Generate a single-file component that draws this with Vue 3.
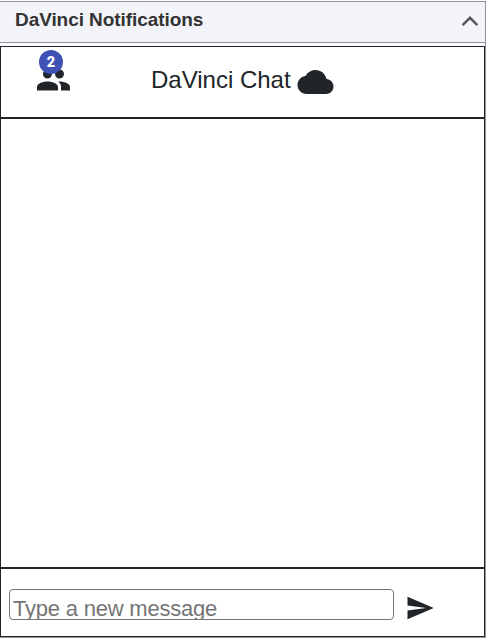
<script setup>
import { ref } from 'vue'

const title = ref('DaVinci Notifications')
const participants = ref(2)
const message = ref('')
</script>

<template>
  <div class="panel">
    <header class="panel-header">
      <span class="panel-title">{{ title }}</span>
      <svg class="chevron" viewBox="0 0 18 12" aria-hidden="true">
        <path d="M1.6 10.2 L9 2.8 L16.4 10.2" />
      </svg>
    </header>
    <section class="chat">
      <div class="chat-header">
        <div class="people">
          <svg class="icon" viewBox="-0.33 0 24 24" aria-hidden="true">
            <path d="M16 11c1.66 0 2.99-1.34 2.99-3S17.66 5 16 5c-1.66 0-3 1.34-3 3s1.34 3 3 3zm-8 0c1.66 0 2.99-1.34 2.99-3S9.66 5 8 5C6.34 5 5 6.34 5 8s1.34 3 3 3zm0 2c-2.33 0-7 1.17-7 3.5V19h14v-2.5c0-2.33-4.67-3.5-7-3.5zm8 0c-.29 0-.62.02-.97.05 1.16.84 1.97 1.97 1.97 3.45V19h6v-2.5c0-2.33-4.67-3.5-7-3.5z" />
          </svg>
          <span class="badge">{{ participants }}</span>
        </div>
        <div class="chat-title">
          <span>DaVinci Chat</span>
          <svg class="icon cloud" viewBox="0.33 0 24 24" aria-hidden="true">
            <path d="M19.35 10.04C18.67 6.59 15.64 4 12 4 9.11 4 6.6 5.64 5.35 8.04 2.34 8.36 0 10.91 0 14c0 3.31 2.69 6 6 6h13c2.76 0 5-2.24 5-5 0-2.64-2.05-4.78-4.65-4.96z" />
          </svg>
        </div>
      </div>
      <div class="messages"></div>
      <div class="composer">
        <input v-model="message" class="message-input" type="text" placeholder="Type a new message" />
        <svg class="send" viewBox="0 0 24 24" aria-hidden="true">
          <path d="M2.01 21L23 12 2.01 3 2 10l15 2-15 2z" />
        </svg>
      </div>
    </section>
  </div>
</template>

<style>
body {
  background: #fff;
  overflow: hidden;
}
</style>

<style scoped>
.panel {
  box-sizing: border-box;
  width: 486px;
  height: 637px;
  margin-top: 1px;
  border: 1px solid #939399;
  border-left: 0;
  display: flex;
  flex-direction: column;
  font-family: "Liberation Sans", Arial, sans-serif;
  color: #212529;
}
.panel-header {
  box-sizing: border-box;
  flex: none;
  height: 41px;
  margin-bottom: 3px;
  padding: 0 6px 4px 15px;
  display: flex;
  align-items: center;
  justify-content: space-between;
  background: #f3f4fa;
  border-bottom: 1px solid #939399;
}
.panel-title {
  font-size: 19px;
  line-height: 24px;
  font-weight: 700;
  letter-spacing: -0.07px;
  color: #333;
  white-space: nowrap;
}
.chevron {
  width: 18px;
  height: 12px;
  margin-top: 2px;
}
.chevron path {
  fill: none;
  stroke: #56565b;
  stroke-width: 2.4;
}
.chat {
  box-sizing: border-box;
  flex: 1;
  border: 1px solid #212529;
  display: flex;
  flex-direction: column;
}
.chat-header {
  flex: none;
  height: 70px;
  display: flex;
  align-items: flex-start;
  border-bottom: 2px solid #212529;
}
.icon {
  display: block;
  width: 36px;
  height: 36px;
  overflow: visible;
  fill: #212529;
}
.people {
  position: relative;
  margin: 14.5px 0 0 34px;
}
.badge {
  position: absolute;
  left: 4px;
  top: -11.5px;
  width: 24px;
  height: 24px;
  border-radius: 50%;
  background: #3f51b5;
  color: #fff;
  font: 900 14.5px/25px Roboto, "Liberation Sans", sans-serif;
  text-align: center;
}
.chat-title {
  display: flex;
  margin: 17px 0 0 80px;
  font-size: 24px;
  line-height: 32px;
  white-space: nowrap;
}
.cloud {
  margin-left: 7px;
}
.messages {
  flex: 1;
}
.composer {
  box-sizing: border-box;
  flex: none;
  height: 69px;
  padding: 20px 0 0 8px;
  display: flex;
  align-items: flex-start;
  border-top: 2px solid #212529;
}
.message-input {
  box-sizing: border-box;
  width: 385px;
  height: 31px;
  padding: 8px 3px 0;
  border: 1px solid #767676;
  border-radius: 4px;
  outline: 0;
  background: #fff;
  color: #212529;
  font: 22px/25px "Liberation Sans", Arial, sans-serif;
  letter-spacing: -0.21px;
}
.message-input::placeholder {
  color: #757575;
  opacity: 1;
}
.send {
  width: 30px;
  height: 30px;
  margin: 4px 0 0 11px;
  fill: #212529;
}
</style>
